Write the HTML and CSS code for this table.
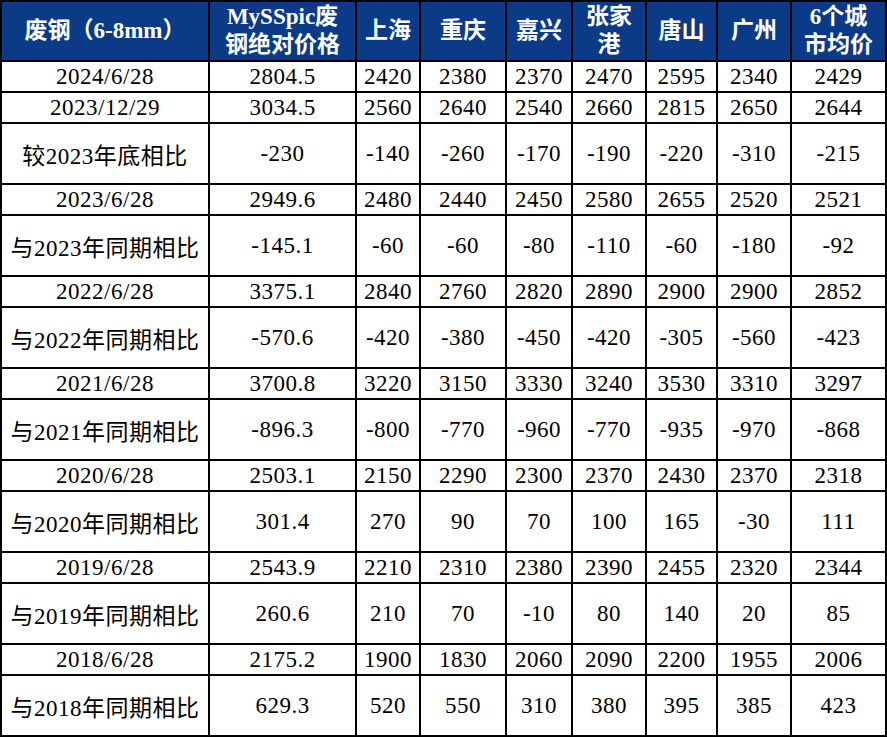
FILE: index.html
```html
<!DOCTYPE html>
<html lang="zh-CN">
<head>
<meta charset="utf-8">
<title>废钢价格对比</title>
<link rel="stylesheet" href="styles.css">
</head>
<body>
<div class="table">
  <div class="th">废钢（6-8mm）</div>
  <div class="th">MySSpic废<br>钢绝对价格</div>
  <div class="th">上海</div>
  <div class="th">重庆</div>
  <div class="th">嘉兴</div>
  <div class="th">张家<br>港</div>
  <div class="th">唐山</div>
  <div class="th">广州</div>
  <div class="th">6个城<br>市均价</div>

  <div class="td">2024/6/28</div><div class="td">2804.5</div><div class="td">2420</div><div class="td">2380</div><div class="td">2370</div><div class="td">2470</div><div class="td">2595</div><div class="td">2340</div><div class="td">2429</div>
  <div class="td">2023/12/29</div><div class="td">3034.5</div><div class="td">2560</div><div class="td">2640</div><div class="td">2540</div><div class="td">2660</div><div class="td">2815</div><div class="td">2650</div><div class="td">2644</div>
  <div class="td">较2023年底相比</div><div class="td">-230</div><div class="td">-140</div><div class="td">-260</div><div class="td">-170</div><div class="td">-190</div><div class="td">-220</div><div class="td">-310</div><div class="td">-215</div>
  <div class="td">2023/6/28</div><div class="td">2949.6</div><div class="td">2480</div><div class="td">2440</div><div class="td">2450</div><div class="td">2580</div><div class="td">2655</div><div class="td">2520</div><div class="td">2521</div>
  <div class="td">与2023年同期相比</div><div class="td">-145.1</div><div class="td">-60</div><div class="td">-60</div><div class="td">-80</div><div class="td">-110</div><div class="td">-60</div><div class="td">-180</div><div class="td">-92</div>
  <div class="td">2022/6/28</div><div class="td">3375.1</div><div class="td">2840</div><div class="td">2760</div><div class="td">2820</div><div class="td">2890</div><div class="td">2900</div><div class="td">2900</div><div class="td">2852</div>
  <div class="td">与2022年同期相比</div><div class="td">-570.6</div><div class="td">-420</div><div class="td">-380</div><div class="td">-450</div><div class="td">-420</div><div class="td">-305</div><div class="td">-560</div><div class="td">-423</div>
  <div class="td">2021/6/28</div><div class="td">3700.8</div><div class="td">3220</div><div class="td">3150</div><div class="td">3330</div><div class="td">3240</div><div class="td">3530</div><div class="td">3310</div><div class="td">3297</div>
  <div class="td">与2021年同期相比</div><div class="td">-896.3</div><div class="td">-800</div><div class="td">-770</div><div class="td">-960</div><div class="td">-770</div><div class="td">-935</div><div class="td">-970</div><div class="td">-868</div>
  <div class="td">2020/6/28</div><div class="td">2503.1</div><div class="td">2150</div><div class="td">2290</div><div class="td">2300</div><div class="td">2370</div><div class="td">2430</div><div class="td">2370</div><div class="td">2318</div>
  <div class="td">与2020年同期相比</div><div class="td">301.4</div><div class="td">270</div><div class="td">90</div><div class="td">70</div><div class="td">100</div><div class="td">165</div><div class="td">-30</div><div class="td">111</div>
  <div class="td">2019/6/28</div><div class="td">2543.9</div><div class="td">2210</div><div class="td">2310</div><div class="td">2380</div><div class="td">2390</div><div class="td">2455</div><div class="td">2320</div><div class="td">2344</div>
  <div class="td">与2019年同期相比</div><div class="td">260.6</div><div class="td">210</div><div class="td">70</div><div class="td">-10</div><div class="td">80</div><div class="td">140</div><div class="td">20</div><div class="td">85</div>
  <div class="td">2018/6/28</div><div class="td">2175.2</div><div class="td">1900</div><div class="td">1830</div><div class="td">2060</div><div class="td">2090</div><div class="td">2200</div><div class="td">1955</div><div class="td">2006</div>
  <div class="td">与2018年同期相比</div><div class="td">629.3</div><div class="td">520</div><div class="td">550</div><div class="td">310</div><div class="td">380</div><div class="td">395</div><div class="td">385</div><div class="td">423</div>
</div>
</body>
</html>
```
FILE: styles.css
```css
html, body {
  margin: 0;
  padding: 0;
  background: #ffffff;
}

.table {
  width: 887px;
  height: 737px;
  box-sizing: border-box;
  display: grid;
  grid-template-columns: 206px 145px 62px 84px 64px 72px 69px 72px 93px;
  grid-template-rows: 58px 29px 29px 59px 29px 59px 29px 59px 29px 59px 29px 59px 29px 59px 29px 59px;
  gap: 2px;
  padding: 2px;
  background: #000000;
  font-family: "Liberation Serif", "Noto Sans CJK SC", serif;
}

.th,
.td {
  display: flex;
  align-items: center;
  justify-content: center;
  text-align: center;
}

.th {
  background: #0b3b86;
  color: #ffffff;
  font-weight: bold;
  font-size: 23px;
  line-height: 28px;
}

.td {
  background: #ffffff;
  color: #000000;
  font-size: 23px;
  letter-spacing: 0.5px;
}
```
